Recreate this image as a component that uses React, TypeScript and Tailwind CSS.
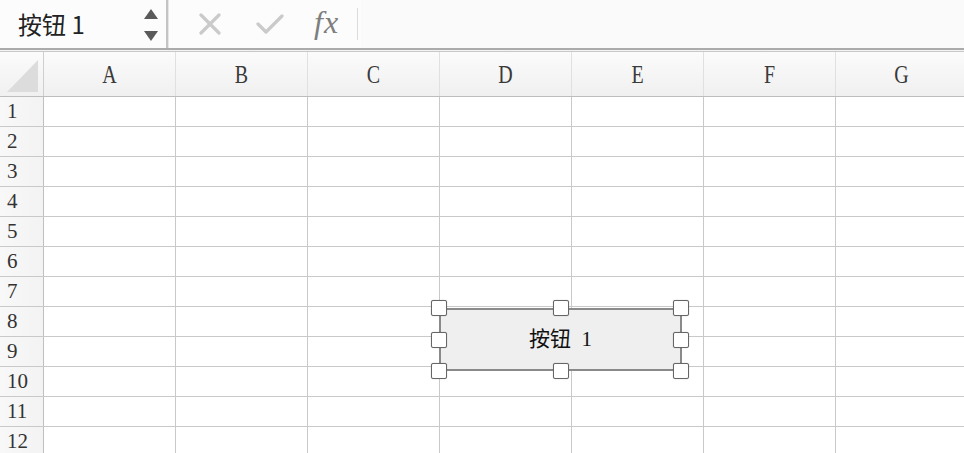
const cols = ['A', 'B', 'C', 'D', 'E', 'F', 'G'];
const rows = [1, 2, 3, 4, 5, 6, 7, 8, 9, 10, 11, 12];

const serif = { fontFamily: '"Liberation Serif", "Noto Sans CJK SC", serif' };

function Handle({ x, y }: { x: number; y: number }) {
  return (
    <div
      className="absolute w-[16px] h-[16px] bg-white border-[1.5px] border-[#666] rounded-[2px] shadow-[0_0_1px_rgba(0,0,0,0.4)]"
      style={{ left: x - 8, top: y - 8 }}
    />
  );
}

function FormulaBar() {
  return (
    <div className="h-[48px] flex items-stretch bg-[#fcfcfc]">
      <div className="w-[166px] flex items-center pl-[18px] pr-[8px]">
        <span
          className="flex-1 text-[24px] text-[#222] leading-none"
          style={{ fontFamily: '"Noto Sans CJK SC", "Noto Sans", sans-serif' }}
        >
          按钮 1
        </span>
        <div className="flex flex-col items-center gap-[12px] pt-[1px]">
          <svg width="14" height="10" viewBox="0 0 14 10"><path d="M7 0 L14 10 L0 10 Z" fill="#5a5a5a" /></svg>
          <svg width="14" height="10" viewBox="0 0 14 10"><path d="M0 0 L14 0 L7 10 Z" fill="#5a5a5a" /></svg>
        </div>
      </div>
      <div className="w-[3px] bg-[#c4c4c4] border-r border-[#e6e6e6]" />
      <div className="flex items-center pl-[29px]">
        <svg width="24" height="22" viewBox="0 0 24 22">
          <path d="M3 2 L21 20 M21 2 L3 20" stroke="#cacaca" strokeWidth="3.2" strokeLinecap="round" />
        </svg>
        <svg width="28" height="22" viewBox="0 0 28 22" className="ml-[34px]">
          <path d="M2 11 L10 19 L26 3" stroke="#cacaca" strokeWidth="3.2" fill="none" strokeLinecap="round" strokeLinejoin="round" />
        </svg>
        <span className="ml-[30px] text-[32px] italic text-[#7e7e7e] leading-none -mt-[4px] tracking-[1px]" style={serif}>
          fx
        </span>
      </div>
      <div className="ml-[18px] my-[8px] w-[1px] bg-[#dcdcdc]" />
      <div className="flex-1 ml-[3px] bg-[#fafafa]" />
    </div>
  );
}

export default function App() {
  return (
    <div className="w-[964px] h-[453px] overflow-hidden bg-white relative">
      <FormulaBar />
      <div className="h-[4px] border-t-2 border-[#ababab] bg-[#f2f2f2] border-b border-b-[#c9c9c9]" />

      <div className="flex h-[45px] border-b border-[#bdbdbd] bg-gradient-to-b from-[#fbfbfb] to-[#f0f0f0]">
        <div className="w-[44px] shrink-0 border-r border-[#cfcfcf] flex items-end justify-end pb-[4px] pr-[5px]">
          <svg width="31" height="32" viewBox="0 0 31 32"><path d="M31 0 L31 32 L0 32 Z" fill="#dcdcdc" /></svg>
        </div>
        {cols.map(c => (
          <div
            key={c}
            className="w-[132px] shrink-0 border-r border-[#e0e0e0] flex items-center justify-center text-[20px] text-[#3a3a3a]"
            style={serif}
          >
            <span className="scale-y-[1.3] inline-block">{c}</span>
          </div>
        ))}
      </div>

      {rows.map(r => (
        <div key={r} className="flex h-[30px] border-b border-[#c9c9c9]">
          <div
            className="w-[44px] shrink-0 border-r border-[#bfbfbf] bg-gradient-to-r from-[#f8f8f8] to-[#f3f3f3] flex items-center pl-[7px] text-[21px] text-[#333]"
            style={serif}
          >
            {r}
          </div>
          {cols.map(c => (
            <div key={c} className="w-[132px] shrink-0 border-r border-[#c9c9c9]" />
          ))}
        </div>
      ))}

      <div
        className="absolute left-[439px] top-[308px] w-[243px] h-[63px] border-2 border-[#8a8a8a] bg-[#efefef] flex items-center justify-center text-[21px] text-[#111]"
        style={{ fontFamily: '"Liberation Serif", "Noto Sans CJK SC", serif' }}
      >
        按钮&nbsp;&nbsp;1
      </div>
      {[439, 561, 681].map(x =>
        [308, 340, 371].map(y =>
          x === 561 && y === 340 ? null : <Handle key={`${x}-${y}`} x={x} y={y} />
        )
      )}
    </div>
  );
}
